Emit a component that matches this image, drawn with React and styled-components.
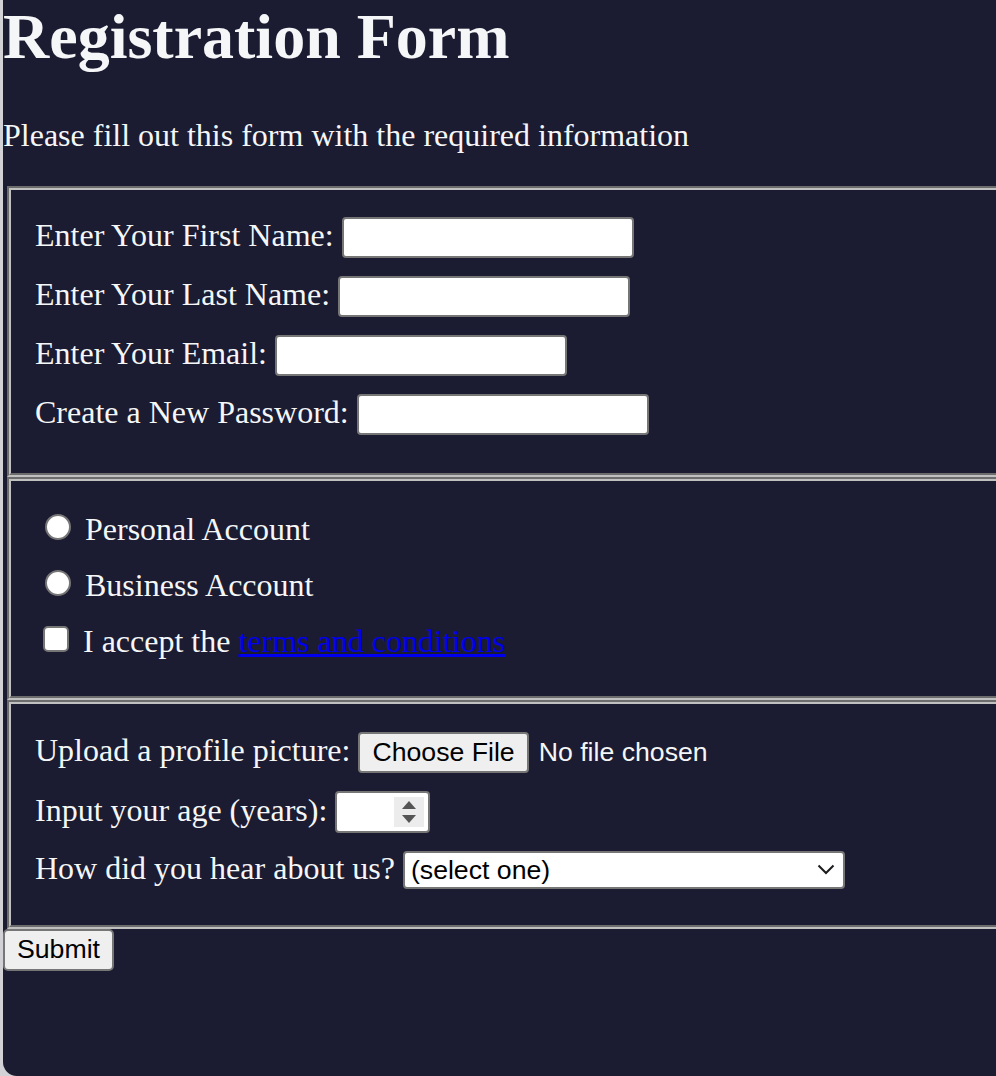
import React from 'react';
import styled, { createGlobalStyle } from 'styled-components';

const GlobalStyle = createGlobalStyle`
  html, body {
    margin: 0;
    padding: 0;
    background: #d2d2d6;
  }
`;

const Page = styled.div`
  margin-left: 3px;
  min-height: 1076px;
  box-sizing: border-box;
  background: #1b1b32;
  color: #f5f6f7;
  border-bottom-left-radius: 14px;
  font-family: "Liberation Serif", "Times New Roman", serif;
  overflow: hidden;
`;

const Title = styled.h1`
  margin: 0 0 43px;
  font-size: 64px;
  font-weight: bold;
`;

const Intro = styled.p`
  margin: 0 0 32px;
  font-size: 32px;
`;

const Form = styled.form`
  margin: 0;
`;

const Section = styled.fieldset`
  margin: 0 0 0 4px;
  padding: 11.2px 24px 20px;
  border: 4px groove #c0c0c0;
  border-right: none;
  min-width: 0;
`;

const Field = styled.label`
  display: block;
  margin: 16px 0;
  font-size: 32px;
  white-space: nowrap;
`;

const controlFont = `
  font-family: "Liberation Sans", Arial, sans-serif;
  font-size: 26.67px;
`;

const TextInput = styled.input`
  ${controlFont}
  box-sizing: border-box;
  width: 292px;
  height: 41px;
  margin: 0 0 2px;
  padding: 2px 6px;
  border: 2px solid #767676;
  border-radius: 4px;
  background: #fff;
  color: #000;
  outline: none;
`;

const Choice = styled.input`
  appearance: none;
  box-sizing: border-box;
  width: 26px;
  height: 26px;
  margin: ${p => (p.type === 'radio' ? '6px 6px 0 10px' : '6px 6px 0 8px')};
  border: 2px solid #767676;
  border-radius: ${p => (p.type === 'radio' ? '50%' : '5px')};
  background: #fff;
  vertical-align: baseline;
`;

const TermsLink = styled.a`
  color: #0000ee;
  text-decoration: underline;
`;

const FileInput = styled.input`
  ${controlFont}
  color: #f5f6f7;
  margin: 0 0 2px;
  vertical-align: baseline;

  &::file-selector-button {
    ${controlFont}
    box-sizing: border-box;
    height: 41px;
    margin: 0 10px 0 0;
    padding: 0 12px;
    border: 2px solid #767676;
    border-radius: 4px;
    background: #efefef;
    color: #000;
  }
`;

const AgeBox = styled.span`
  display: inline-flex;
  align-items: stretch;
  box-sizing: border-box;
  width: 95px;
  height: 42px;
  margin: 0 0 1px;
  border: 2px solid #767676;
  border-radius: 4px;
  background: #fff;
  vertical-align: baseline;
`;

const AgeInput = styled.input`
  ${controlFont}
  flex: 1;
  width: 0;
  min-width: 0;
  padding: 0 6px;
  border: none;
  outline: none;
  background: transparent;
  appearance: textfield;
  -moz-appearance: textfield;

  &::-webkit-inner-spin-button,
  &::-webkit-outer-spin-button {
    -webkit-appearance: none;
    margin: 0;
  }
`;

const Spinner = styled.span`
  display: flex;
  flex-direction: column;
  align-items: center;
  justify-content: center;
  gap: 6px;
  width: 30px;
  margin: 4px 4px 4px 0;
  background: #ececec;
`;

const Arrow = styled.span`
  width: 0;
  height: 0;
  border-left: 7px solid transparent;
  border-right: 7px solid transparent;
  ${p =>
    p.down ? 'border-top: 8px solid #555;' : 'border-bottom: 8px solid #555;'}
`;

const SelectBox = styled.span`
  display: inline-flex;
  align-items: center;
  box-sizing: border-box;
  width: 442px;
  height: 38px;
  padding-right: 8px;
  border: 2px solid #767676;
  border-radius: 4px;
  background: #fff;
  vertical-align: baseline;
`;

const Select = styled.select`
  ${controlFont}
  flex: 1;
  align-self: stretch;
  padding: 0 0 0 6px;
  border: none;
  outline: none;
  background: transparent;
  color: #000;
  appearance: none;
`;

const Chevron = () => (
  <svg width="18" height="11" viewBox="0 0 18 11" aria-hidden="true">
    <path d="M1.5 1.5 L9 9 L16.5 1.5" fill="none" stroke="#1c1c1c" strokeWidth="2" />
  </svg>
);

const SubmitButton = styled.input`
  ${controlFont}
  box-sizing: border-box;
  height: 42px;
  margin: 0;
  padding: 0 12px;
  border: 2px solid #767676;
  border-radius: 5px;
  background: #efefef;
  color: #000;
`;

export default function App() {
  return (
    <>
      <GlobalStyle />
      <Page>
        <Title>Registration Form</Title>
        <Intro>Please fill out this form with the required information</Intro>
        <Form onSubmit={e => e.preventDefault()}>
          <Section>
            <Field>
              Enter Your First Name: <TextInput type="text" />
            </Field>
            <Field>
              Enter Your Last Name: <TextInput type="text" />
            </Field>
            <Field>
              Enter Your Email: <TextInput type="email" />
            </Field>
            <Field>
              Create a New Password: <TextInput type="password" />
            </Field>
          </Section>
          <Section>
            <Field>
              <Choice type="radio" name="account-type" /> Personal Account
            </Field>
            <Field>
              <Choice type="radio" name="account-type" /> Business Account
            </Field>
            <Field>
              <Choice type="checkbox" /> I accept the{' '}
              <TermsLink href="#terms">terms and conditions</TermsLink>
            </Field>
          </Section>
          <Section>
            <Field>
              Upload a profile picture: <FileInput type="file" />
            </Field>
            <Field>
              Input your age (years):{' '}
              <AgeBox>
                <AgeInput type="number" min="13" max="120" />
                <Spinner>
                  <Arrow />
                  <Arrow down />
                </Spinner>
              </AgeBox>
            </Field>
            <Field>
              How did you hear about us?{' '}
              <SelectBox>
                <Select defaultValue="">
                  <option value="">(select one)</option>
                  <option value="1">freeCodeCamp News</option>
                  <option value="2">freeCodeCamp YouTube Channel</option>
                  <option value="3">freeCodeCamp Forum</option>
                  <option value="4">Other</option>
                </Select>
                <Chevron />
              </SelectBox>
            </Field>
          </Section>
          <SubmitButton type="submit" value="Submit" />
        </Form>
      </Page>
    </>
  );
}
